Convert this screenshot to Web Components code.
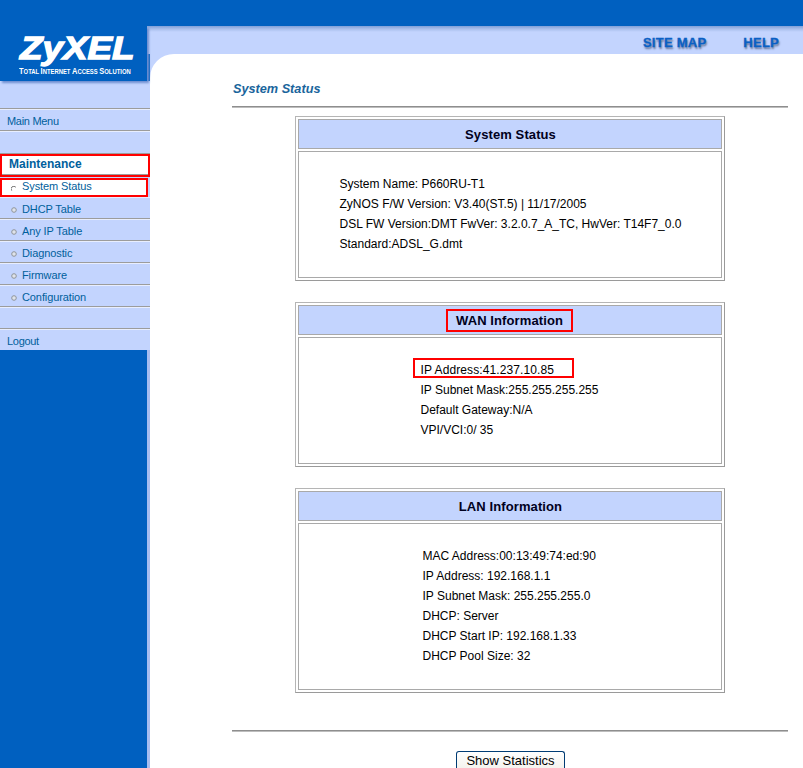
<!DOCTYPE html>
<html lang="en">
  <head>
    <meta charset="UTF-8" />
    <title>System Status</title>
    <style>
      html, body { margin: 0; height: 768px; overflow: hidden; background: #fff }
      body { font-family: "Liberation Sans", Arial, sans-serif; font-size: 12px; color: #000 }
    </style>
  </head>
  <body>
    <zy-page>
      <zy-sidebar slot="side">
        <zy-nav-link>Main Menu</zy-nav-link>
        <zy-nav-gap></zy-nav-gap>
        <zy-nav-head>Maintenance</zy-nav-head>
        <zy-nav-item active>System Status</zy-nav-item>
        <zy-nav-item>DHCP Table</zy-nav-item>
        <zy-nav-item>Any IP Table</zy-nav-item>
        <zy-nav-item>Diagnostic</zy-nav-item>
        <zy-nav-item>Firmware</zy-nav-item>
        <zy-nav-item>Configuration</zy-nav-item>
        <zy-nav-item blank></zy-nav-item>
        <zy-nav-link last>Logout</zy-nav-link>
      </zy-sidebar>
      <zy-status-box heading="System Status" indent="41" lines="4">
        <div>System Name: P660RU-T1</div>
        <div>ZyNOS F/W Version: V3.40(ST.5) | 11/17/2005</div>
        <div>DSL FW Version:DMT FwVer: 3.2.0.7_A_TC, HwVer: T14F7_0.0</div>
        <div>Standard:ADSL_G.dmt</div>
      </zy-status-box>
      <zy-status-box heading="WAN Information" indent="122" lines="4" marked>
        <zy-marked>IP Address:41.237.10.85</zy-marked>
        <div>IP Subnet Mask:255.255.255.255</div>
        <div>Default Gateway:N/A</div>
        <div>VPI/VCI:0/ 35</div>
      </zy-status-box>
      <zy-status-box heading="LAN Information" indent="124" lines="6">
        <div>MAC Address:00:13:49:74:ed:90</div>
        <div>IP Address: 192.168.1.1</div>
        <div>IP Subnet Mask: 255.255.255.0</div>
        <div>DHCP: Server</div>
        <div>DHCP Start IP: 192.168.1.33</div>
        <div>DHCP Pool Size: 32</div>
      </zy-status-box>
    </zy-page>

    <script>
      const BLUE = '#0060c0'
      const LIGHT = '#c3d4fe'
      const LINK = '#00609c'
      const RULE = '#9c9c9c'
      const SHINE = '#e8eeff'

      class ZyPage extends HTMLElement {
        connectedCallback() {
          const root = this.attachShadow({ mode: 'open' })
          root.innerHTML = `
            <style>
              :host { display: grid; grid-template-columns: 150px 1fr; grid-template-rows: 26px 28px 1fr; height: 768px; background: ${BLUE} }
              .logo-col { grid-column: 1; grid-row: 1 / 4; display: flex; flex-direction: column; min-height: 0 }
              .strip {
                grid-column: 2; grid-row: 2; display: flex; justify-content: flex-end; align-items: flex-start;
                gap: 37px; padding: 10px 24px 0 0; margin-left: -3px;
                background: linear-gradient(#7f9fd8 0, #a9bfec 3px, ${LIGHT} 6px);
              }
              .strip a {
                font: bold 13px/14px "Liberation Sans", Arial, sans-serif; color: #0a60c4; letter-spacing: .25px;
                -webkit-text-stroke: .3px #0a60c4; text-shadow: 1px 2px 2px #5f6f94;
              }
              .main { grid-column: 2; grid-row: 3; background: ${LIGHT}; min-height: 0 }
              .sheet { height: 100%; box-sizing: border-box; background: #fff; border-top-left-radius: 24px; padding: 27px 15px 0 82px }
              h1 { margin: 0 0 8px 1px; font: italic bold 12.7px/17px "Liberation Sans", Arial, sans-serif; color: #1a659c }
              hr { margin: 0; height: 2px; border: 0; background: linear-gradient(#8e8e8e 50%, #bdbdbd 50%) }
              .boxes { display: flex; flex-direction: column; align-items: center; gap: 21px; padding: 8px 0 37px 0; margin-left: -1px }
              .actions { display: flex; justify-content: center; padding: 19px 0 0 0; margin-left: 1px }
              button {
                width: 109px; height: 17px; box-sizing: border-box; padding: 0; overflow: visible; background: linear-gradient(#fff, #f4f3ee);
                border: 1px solid #003c74; border-bottom: 0; border-radius: 3px 3px 0 0; color: #000;
                font: 13px/15px "Liberation Sans", Arial, sans-serif;
              }
            </style>
            <div class="logo-col"><slot name="side"></slot></div>
            <div class="strip"><a>SITE MAP</a><a>HELP</a></div>
            <div class="main">
              <div class="sheet">
                <h1>System Status</h1>
                <hr>
                <div class="boxes"><slot></slot></div>
                <hr>
                <div class="actions"><button>Show Statistics</button></div>
              </div>
            </div>`
        }
      }

      class ZySidebar extends HTMLElement {
        connectedCallback() {
          const root = this.attachShadow({ mode: 'open' })
          root.innerHTML = `
            <style>
              :host { display: flex; flex-direction: column; height: 768px }
              .top { height: 26px; background: ${BLUE} }
              .logo {
                height: 55px; width: 147px; box-sizing: border-box; padding: 8px 0 0 20px; background: ${BLUE};
                box-shadow: 2px 2px 2px #6f8fd0; color: #fff; position: relative; overflow: hidden;
              }
              .mark {
                display: block; font: italic bold 32px/29px "Liberation Sans", Arial, sans-serif; -webkit-text-stroke: 1.3px #fff;
                transform-origin: 0 0; transform: scaleX(1.15); white-space: nowrap;
              }
              .tag {
                display: block; margin: 3px 0 0 -1px; font: bold 6.6px/10px "Liberation Sans", Arial, sans-serif;
                transform-origin: 0 0; transform: scaleX(.89); white-space: nowrap;
              }
              .tag b { font-size: 8.4px }
              .rail { height: 27px; background: ${LIGHT} }
              .items { display: flex; flex-direction: column; background: ${LIGHT} }
              .tail { flex: 1; width: 147px; background: ${BLUE}; box-shadow: 3px 0 0 #a7bdf0 }
            </style>
            <div class="top"></div>
            <div class="logo">
              <span class="mark">ZyXEL</span>
              <span class="tag"><b>T</b>OTAL <b>I</b>NTERNET <b>A</b>CCESS <b>S</b>OLUTION</span>
            </div>
            <div class="rail"></div>
            <div class="items"><slot></slot></div>
            <div class="tail"></div>`
        }
      }

      // plain row with grey rule on top
      class ZyNavLink extends HTMLElement {
        connectedCallback() {
          const root = this.attachShadow({ mode: 'open' })
          root.innerHTML = `
            <style>
              :host {
                display: block; height: 22px; box-sizing: border-box; padding: 5px 0 0 7px;
                border-top: 1px solid ${RULE}; box-shadow: inset 0 1px 0 ${SHINE};
                font: 11px/14px "Liberation Sans", Arial, sans-serif; letter-spacing: -.3px; color: ${LINK}; background: ${LIGHT};
              }
              :host([last]) { height: 21px; border-top: 0; padding-top: 5px }
            </style><slot></slot>`
        }
      }

      class ZyNavGap extends HTMLElement {
        connectedCallback() {
          const root = this.attachShadow({ mode: 'open' })
          root.innerHTML = `
            <style>
              :host { display: block; height: 24px; box-sizing: border-box; border-top: 1px solid ${RULE}; border-bottom: 1px solid ${RULE}; box-shadow: inset 0 1px 0 ${SHINE}; background: ${LIGHT} }
            </style>`
        }
      }

      class ZyNavHead extends HTMLElement {
        connectedCallback() {
          const root = this.attachShadow({ mode: 'open' })
          root.innerHTML = `
            <style>
              :host {
                display: block; height: 23px; box-sizing: border-box; padding: 1px 0 0 7px; margin-bottom: 1px;
                border: 2px solid #f00; width: 150px; background: #fff; box-shadow: inset 0 -1px 0 ${RULE};
                font: bold 12px/15px "Liberation Sans", Arial, sans-serif; color: ${LINK};
              }
            </style><slot></slot>`
        }
      }

      class ZyNavItem extends HTMLElement {
        connectedCallback() {
          const active = this.hasAttribute('active')
          const blank = this.hasAttribute('blank')
          const root = this.attachShadow({ mode: 'open' })
          root.innerHTML = `
            <style>
              :host {
                display: flex; align-items: center; gap: 5px; box-sizing: border-box; height: 22px; padding: 0 0 0 11px;
                border-bottom: 1px solid ${RULE}; box-shadow: inset 0 1px 0 ${SHINE};
                font: 11px/14px "Liberation Sans", Arial, sans-serif; letter-spacing: -.1px; color: ${LINK}; background: ${LIGHT};
              }
              :host([active]) { height: 19px; width: 148px; border: 2px solid #f00; padding-left: 9px; background: #fff; box-shadow: none }
              svg { flex: none; margin-top: 5px }
              span { margin-top: 3px }
              :host([active]) svg { margin-top: 2px }
              :host([active]) span { margin-top: -3px }
            </style>
            ${blank ? '' : `<svg width="6" height="6" viewBox="0 0 6 6">
              ${active
                ? '<path d="M.7 4.6A2.4 2.4 0 0 1 4.8 1.2" fill="none" stroke="#6f6f6f" stroke-width="1"/>'
                : '<circle cx="3" cy="3" r="2.3" fill="#dfe3ea" stroke="#8f9499" stroke-width="1"/>'}
            </svg>
            <span><slot></slot></span>`}`
        }
      }

      class ZyStatusBox extends HTMLElement {
        connectedCallback() {
          const marked = this.hasAttribute('marked')
          const lines = Number(this.getAttribute('lines'))
          const root = this.attachShadow({ mode: 'open' })
          root.innerHTML = `
            <style>
              :host {
                display: block; width: 430px; box-sizing: border-box; padding: 2px;
                border: 1px solid #9a9a9a; border-top-color: #b5b5b5; border-left-color: #b5b5b5; background: #fff;
              }
              .head {
                height: 30px; box-sizing: border-box; display: flex; align-items: center; justify-content: center;
                background: ${LIGHT}; border: 1px solid #a9a9a9;
                font: bold 13px/17px "Liberation Sans", Arial, sans-serif; letter-spacing: .1px; color: #000020;
              }
              .head span { margin-left: 2px }
              .head span.marked { width: 127px; height: 23px; margin-left: 0; box-sizing: border-box; border: 2px solid #f00; text-align: center; line-height: 19px }
              .body {
                margin-top: 2px; box-sizing: border-box; border: 1px solid #a9a9a9; padding: 22px 0 0 ${this.getAttribute('indent')}px;
                height: ${lines * 20 + 47}px; font: 12px/20px "Liberation Sans", Arial, sans-serif;
              }
            </style>
            <div class="head"><span class="${marked ? 'marked' : ''}">${this.getAttribute('heading')}</span></div>
            <div class="body"><slot></slot></div>`
        }
      }

      class ZyMarked extends HTMLElement {
        connectedCallback() {
          const root = this.attachShadow({ mode: 'open' })
          root.innerHTML = `
            <style>
              :host { display: block; box-sizing: border-box; width: 161px; height: 20px; margin: -2px 0 2px -8px; padding: 2px 0 0 6px; border: 2px solid #f00; line-height: 16px; letter-spacing: .1px }
            </style><slot></slot>`
        }
      }

      window.customElements.define('zy-page', ZyPage)
      window.customElements.define('zy-sidebar', ZySidebar)
      window.customElements.define('zy-nav-link', ZyNavLink)
      window.customElements.define('zy-nav-gap', ZyNavGap)
      window.customElements.define('zy-nav-head', ZyNavHead)
      window.customElements.define('zy-nav-item', ZyNavItem)
      window.customElements.define('zy-status-box', ZyStatusBox)
      window.customElements.define('zy-marked', ZyMarked)
    </script>
  </body>
</html>
